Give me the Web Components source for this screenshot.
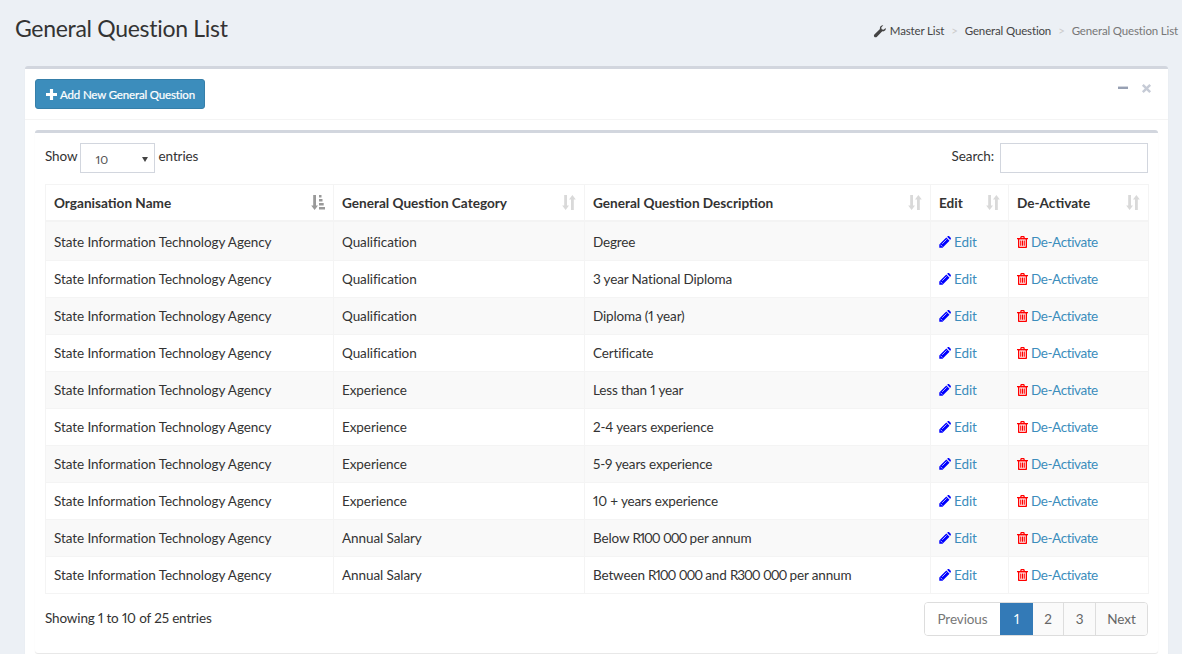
<!DOCTYPE html>
<html>
<head>
<meta charset="utf-8">
<title>General Question List</title>
<style>
  html,body{margin:0;padding:0;height:654px;overflow:hidden}
  body{background:#ecf0f5;color:#333;font-family:'Lato','Liberation Sans',sans-serif;font-size:13.5px;font-feature-settings:"pnum"}
</style>
</head>
<body>
<page-title heading="General Question List"></page-title>
<outer-box>
  <add-button slot="tools">Add New General Question</add-button>
  <question-panel></question-panel>
</outer-box>

<script>
var ICONS = {
  plus: '<path d="M5 0h4v5h5v4H9v5H5V9H0V5h5z"/>',
  minus: '<path d="M0 5h14v3.4H0z"/>',
  times: '<path d="M1.200 3.400l2.200-2.200L7 4.800l3.600-3.600 2.200 2.200L9.200 7l3.600 3.600-2.200 2.200L7 9.200l-3.600 3.600-2.200-2.200L4.800 7z"/>',
  wrench: '<path d="M13.700 3.200c.2.7.1 1.700-.5 2.500-.8 1-2 1.400-3.200 1.100L4 12.800c-.7.7-1.800.7-2.500 0s-.7-1.800 0-2.500l6-6C7.200 3 7.600 1.800 8.600 1 9.400.4 10.400.2 11.100.4L8.900 2.600l.4 2 2 .5z"/>'
};
function icon(name, size, color) {
  return '<svg viewBox="0 0 14 14" width="' + size + '" height="' + size + '" fill="' + color + '" aria-hidden="true">' + ICONS[name] + '</svg>';
}
var PENCIL = '<svg viewBox="0 0 12 12" width="12" height="12" aria-hidden="true"><path fill="#0000ff" d="M.3 8.500 7.300 1.500 10.500 4.700 3.500 11.700H.3zM8.100.8 8.800.2C9.200-.1 9.800-.1 10.200.2L11.700 1.700C12 2.100 12 2.700 11.700 3.100L11.200 3.900z"/><path stroke="#fff" stroke-width=".7" fill="none" d="M1.500 8.700 3.300 10.500M3.200 7.800 7.600 3.400"/></svg>';
var TRASH = '<svg viewBox="0 0 11 12" width="11" height="12" aria-hidden="true" fill="#ff0000"><path d="M0 2h11v1.300H0zM3 2.300 3.800 0H7.200L8 2.300H6.700L6.300 1.200H4.700L4.300 2.300z"/><path fill-rule="evenodd" d="M1 3h9v8c0 .6-.4 1-1 1H2c-.6 0-1-.4-1-1zM2.300 3.300V10.800H8.700V3.300z"/><path d="M3.200 4.500h1.100v5.200H3.200zM4.950 4.500h1.100v5.200H4.950zM6.700 4.500h1.100v5.200H6.700z"/></svg>';

class PageTitle extends HTMLElement {
  connectedCallback() {
    var root = this.attachShadow({ mode: 'open' });
    root.innerHTML = `<style>
      :host{display:flex;align-items:flex-start;justify-content:space-between;height:66px;padding:0 4px 0 15px;box-sizing:border-box}
      h1{margin:13px 0 0;font-size:23px;letter-spacing:-.3px;font-weight:400;line-height:30px;color:#333}
      ol{display:flex;align-items:center;list-style:none;margin:22px 0 0;padding:0;font-size:11.5px;letter-spacing:-.15px;line-height:18px;color:#444}
      li{display:flex;align-items:center}
      li + li::before{content:'>';color:#ccc;padding:0 7px}
      li:last-child{color:#777}
      svg{margin-right:4px}
    </style>
    <h1>${this.getAttribute('heading')}</h1>
    <ol><li>${icon('wrench', 13, '#444')}Master List</li><li>General Question</li><li>General Question List</li></ol>`;
  }
}

class OuterBox extends HTMLElement {
  connectedCallback() {
    var root = this.attachShadow({ mode: 'open' });
    root.innerHTML = `<style>
      :host{display:block;margin:0 14px 0 25px;background:#fff;border-top:3px solid #d2d6de;border-radius:3px;box-shadow:0 1px 1px rgba(0,0,0,.1)}
      .head{display:flex;justify-content:space-between;height:51px;padding:10px;box-sizing:border-box;border-bottom:1px solid #f4f4f4}
      .tools{display:flex;gap:13px;padding:4px 6px 0 0}
      .body{padding:10px}
    </style>
    <div class="head"><slot name="tools"></slot><div class="tools">${icon('minus', 10, '#97a0b3')}${icon('times', 11, '#c6cbd6')}</div></div>
    <div class="body"><slot></slot></div>`;
  }
}

class AddButton extends HTMLElement {
  connectedCallback() {
    var root = this.attachShadow({ mode: 'open' });
    root.innerHTML = `<style>
      :host{display:inline-flex;align-items:center;width:170px;height:30px;padding:0 0 0 10px;box-sizing:border-box;background:#3c8dbc;border:1px solid #367fa9;border-radius:3px;color:#fff;font-size:11.5px;letter-spacing:-.15px;-webkit-text-stroke:.2px #fff}
      svg{margin-right:3px}
    </style>${icon('plus', 11, '#fff')}<slot></slot>`;
  }
}

var ROWS = [
  ['Qualification', 'Degree'],
  ['Qualification', '3 year National Diploma'],
  ['Qualification', 'Diploma (1 year)'],
  ['Qualification', 'Certificate'],
  ['Experience', 'Less than 1 year'],
  ['Experience', '2-4 years experience'],
  ['Experience', '5-9 years experience'],
  ['Experience', '10 + years experience'],
  ['Annual Salary', 'Below <span class="num">R100 000</span> per annum'],
  ['Annual Salary', 'Between <span class="num">R100 000</span> and <span class="num">R300 000</span> per annum']
];

var SORT_BOTH = '<svg class="sort" viewBox="0 0 14 15" width="14" height="15" fill="#d9d9d9"><path d="M2.200 0H5V10.500H7L3.600 15 .2 10.500H2.200zM9 15h2.800V4.500H13.800L10.400 0 7 4.500H9z"/></svg>';
var SORT_ASC = '<svg class="sort" viewBox="0 0 14 15" width="14" height="15" fill="#999"><path d="M2.200 0H5V10.500H7L3.600 15 .2 10.500H2.200zM8 0H10.500V2.500H8zM8 4H11.500V6.500H8zM8 8H12.700V10.500H8zM8 12H14V14.500H8z"/></svg>';

class QuestionPanel extends HTMLElement {
  connectedCallback() {
    var root = this.attachShadow({ mode: 'open' });
    var body = ROWS.map(function (r) {
      return '<tr><td>State Information Technology Agency</td><td>' + r[0] + '</td><td class="desc">' + r[1] + '</td>' +
        '<td><a>' + PENCIL + '<span>Edit</span></a></td>' +
        '<td><a>' + TRASH + '<span class="tight">De-Activate</span></a></td></tr>';
    }).join('');
    root.innerHTML = `<style>
      :host{display:block;padding:10px;height:523px;box-sizing:border-box;background:#fff;border-top:3px solid #d2d6de;border-radius:3px;box-shadow:0 1px 1px rgba(0,0,0,.1)}
      .bar{display:flex;justify-content:space-between;height:30px;margin-bottom:11px;line-height:27px;letter-spacing:-.1px}
      .bar > div{display:flex;gap:3px}
      .select{display:flex;align-items:center;justify-content:space-between;width:75px;height:30px;margin:0 1px 0 -1px;box-sizing:border-box;padding:2px 6px 0 15px;border:1px solid #d2d6de;font-size:12px;color:#555}
      .select i{width:0;height:0;border:3.5px solid transparent;border-top:5px solid #444;border-bottom:0}
      .search{display:block;width:148px;height:30px;box-sizing:border-box;margin-left:3px;border:1px solid #d2d6de}
      table{width:1103px;border-collapse:collapse;table-layout:fixed;border:1px solid #f4f4f4}
      th,td{border:1px solid #f4f4f4;padding:0 8px;text-align:left;white-space:nowrap;letter-spacing:-.08px}
      th{position:relative;height:35px;font-weight:700;font-size:13.6px;letter-spacing:0;border-bottom-width:2px}
      td{height:36px}
      tbody tr:first-child td{height:36px;padding-top:2px}
      td.desc{letter-spacing:-.15px}
      td .num{letter-spacing:-1.1px;word-spacing:1px}
      tbody tr:nth-child(odd){background:#f9f9f9}
      .sort{position:absolute;right:8px;top:10px}
      a{display:flex;align-items:center;gap:3px;color:#3c8dbc}
      a .tight{letter-spacing:-.4px}
      .foot{display:flex;justify-content:space-between;margin-top:8px}
      .info{padding-top:6px;line-height:20px;letter-spacing:-.15px}
      .pages{display:flex;height:34px;box-sizing:border-box;border:1px solid #ddd;border-radius:4px;color:#777;line-height:32px;overflow:hidden;letter-spacing:-.1px}
      .pages span{text-align:center;background:#fafafa;border-left:1px solid #ddd;box-sizing:border-box;color:#666}
      .pages span:first-child{background:#fff;border-left:0;color:#777}
      .pages .on{background:#337ab7;color:#fff;border-left:0}
    </style>
    <div class="bar">
      <div>Show <div class="select">10<i></i></div> entries</div>
      <div>Search: <div class="search"></div></div>
    </div>
    <table>
      <colgroup><col style="width:288px"><col style="width:251px"><col style="width:346px"><col style="width:78px"><col style="width:140px"></colgroup>
      <thead><tr><th>Organisation Name${SORT_ASC}</th><th>General Question Category${SORT_BOTH}</th><th>General Question Description${SORT_BOTH}</th><th>Edit${SORT_BOTH}</th><th>De-Activate${SORT_BOTH}</th></tr></thead>
      <tbody>${body}</tbody>
    </table>
    <div class="foot">
      <div class="info">Showing 1 to 10 of 25 entries</div>
      <div class="pages"><span style="width:75px">Previous</span><span class="on" style="width:33px">1</span><span style="width:30px;border-left:0">2</span><span style="width:32px">3</span><span style="width:52px">Next</span></div>
    </div>`;
  }
}

customElements.define('page-title', PageTitle);
customElements.define('outer-box', OuterBox);
customElements.define('add-button', AddButton);
customElements.define('question-panel', QuestionPanel);
</script>
</body>
</html>
